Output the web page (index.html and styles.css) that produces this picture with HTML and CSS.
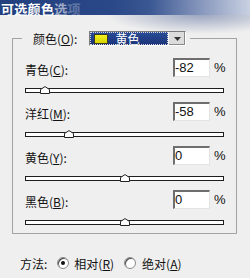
FILE: index.html
```html
<!DOCTYPE html>
<html>
<head>
<meta charset="utf-8">
<link rel="stylesheet" href="styles.css">
</head>
<body>
<div class="window">
  <div class="titlebar"><span class="title">可选颜色<span class="fade1">选</span><span class="fade2">项</span></span></div>
  <fieldset class="group">
    <legend class="legend">
      <span class="lbl">颜色(<u>O</u>):</span>
      <span class="combo">
        <span class="combo-sel"><span class="swatch"></span><span class="combo-text">黄色</span></span>
        <span class="combo-btn"><svg width="7" height="4" viewBox="0 0 7 4"><path d="M0 0H7L3.5 4Z" fill="#333"/></svg></span>
      </span>
    </legend>
    <div class="row">
      <div class="head"><span class="lbl">青色(<u>C</u>):</span><span class="field"><span class="input">-82</span><span class="pct">%</span></span></div>
      <div class="track"><svg class="thumb" style="left:9.5%" width="10" height="8" viewBox="0 0 10 8"><path d="M0.5 7.5V3.5L5 0.6L9.5 3.5V7.5Z" fill="#fff" stroke="#222"/></svg></div>
    </div>
    <div class="row">
      <div class="head"><span class="lbl">洋红(<u>M</u>):</span><span class="field"><span class="input">-58</span><span class="pct">%</span></span></div>
      <div class="track"><svg class="thumb" style="left:21.7%" width="10" height="8" viewBox="0 0 10 8"><path d="M0.5 7.5V3.5L5 0.6L9.5 3.5V7.5Z" fill="#fff" stroke="#222"/></svg></div>
    </div>
    <div class="row">
      <div class="head"><span class="lbl">黄色(<u>Y</u>):</span><span class="field"><span class="input">0</span><span class="pct">%</span></span></div>
      <div class="track"><svg class="thumb" style="left:50.3%" width="10" height="8" viewBox="0 0 10 8"><path d="M0.5 7.5V3.5L5 0.6L9.5 3.5V7.5Z" fill="#fff" stroke="#222"/></svg></div>
    </div>
    <div class="row">
      <div class="head"><span class="lbl">黑色(<u>B</u>):</span><span class="field"><span class="input">0</span><span class="pct">%</span></span></div>
      <div class="track"><svg class="thumb" style="left:50.3%" width="10" height="8" viewBox="0 0 10 8"><path d="M0.5 7.5V3.5L5 0.6L9.5 3.5V7.5Z" fill="#fff" stroke="#222"/></svg></div>
    </div>
  </fieldset>
  <div class="method">
    <span class="mlabel">方法:</span>
    <span class="radio checked"></span><span class="rlabel">相对(<u>R</u>)</span>
    <span class="radio r2"></span><span class="rlabel">绝对(<u>A</u>)</span>
  </div>
</div>
</body>
</html>
```
FILE: styles.css
```css
* { box-sizing: border-box; }
html, body { margin: 0; padding: 0; }
body {
  width: 250px;
  height: 278px;
  overflow: hidden;
  background: #efefef;
  font-family: "Noto Sans CJK SC", "Liberation Sans", sans-serif;
  font-size: 12px;
  color: #111;
}
u { text-decoration: underline; text-underline-offset: 1px; }
.window {
  height: 278px;
  padding-top: 0;
  background:
    radial-gradient(ellipse 95px 20px at 200px 14px, rgba(80,100,150,0.55), rgba(239,239,239,0) 100%),
    #efefef;
}
.titlebar {
  height: 15px;
  padding-left: 1px;
  background: linear-gradient(to right, #223f7e 0%, #2a4787 45%, #3b5893 60%, #7f90b8 78%, #c9d1e2 100%);
}
.title {
  color: #fff;
  font-weight: bold;
  font-size: 13px;
  line-height: 15px;
  letter-spacing: 0.3px;
}
.fade1 { opacity: 0.55; }
.fade2 { opacity: 0.25; }

.group {
  margin: 16px 0 0 12px;
  width: 225px;
  padding: 0 9px 8px 12px;
  border: 1px solid #a3a3a3;
  min-width: 0;
}
.legend {
  display: flex;
  align-items: center;
  margin-left: -3px;
  padding: 0 4px 0 11px;
  height: 15px;
}
.legend .lbl { margin-right: 12px; line-height: 15px; }
.combo {
  display: flex;
  width: 97px;
  height: 15px;
  border-top: 1px solid #7a7a7a;
  border-left: 1px solid #7a7a7a;
  border-bottom: 1px solid #fff;
  border-right: 1px solid #fff;
  background: #fff;
}
.combo-sel {
  flex: 1;
  display: flex;
  align-items: center;
  background: linear-gradient(to bottom, #2a4c98, #1b3478);
  outline: 1px dotted #d8d8d8;
  outline-offset: -1px;
  padding-left: 4px;
}
.swatch {
  width: 14px;
  height: 10px;
  background: linear-gradient(to bottom, #f2f020, #d6d400);
  border: 1px solid #3a3a20;
  margin-right: 7px;
}
.combo-text { color: #fff; font-size: 12px; line-height: 13px; }
.combo-btn {
  width: 17px;
  display: flex;
  align-items: center;
  justify-content: center;
  background: #dcdcdc;
  border-left: 1px solid #f4f4f4;
  box-shadow: inset -1px -1px #8a8a8a;
}

.row { margin-top: 9px; }
.row:first-of-type { margin-top: 12px; }
.head {
  display: flex;
  justify-content: space-between;
  align-items: center;
  height: 19px;
}
.lbl { font-size: 12px; line-height: 14px; color: #111; }
.head .lbl { margin-top: 4px; }
.field { display: flex; align-items: center; }
.input {
  width: 37px;
  height: 19px;
  background: #fff;
  border-top: 2px solid #6e6e6e;
  border-left: 2px solid #6e6e6e;
  border-bottom: 1px solid #e4e4e4;
  border-right: 1px solid #e4e4e4;
  font-family: "Liberation Sans", sans-serif;
  font-size: 13px;
  line-height: 15px;
  padding-left: 0;
  color: #111;
}
.pct {
  font-family: "Liberation Sans", sans-serif;
  font-size: 13px;
  margin-left: 4px;
  width: 13px;
}
.track {
  position: relative;
  margin: 11px 3px 0 0;
  height: 5px;
  background: #fff;
  border: 1px solid #1e1e1e;
}
.thumb {
  position: absolute;
  bottom: -2px;
  transform: translateX(-50%);
  display: block;
}

.method {
  display: flex;
  align-items: center;
  height: 16px;
  margin-top: 21px;
}
.mlabel { margin-left: 20px; margin-right: 10px; }
.radio {
  width: 12px;
  height: 12px;
  border-radius: 50%;
  background: #fff;
  border: 1px solid #8a8a8a;
  box-shadow: inset 1px 1px #4a4a4a;
  position: relative;
  margin-right: 5px;
}
.radio.checked::after {
  content: "";
  position: absolute;
  left: 3px;
  top: 3px;
  width: 4px;
  height: 4px;
  border-radius: 50%;
  background: #111;
}
.radio.r2 { margin-left: 10px; margin-right: 6px; }
```
